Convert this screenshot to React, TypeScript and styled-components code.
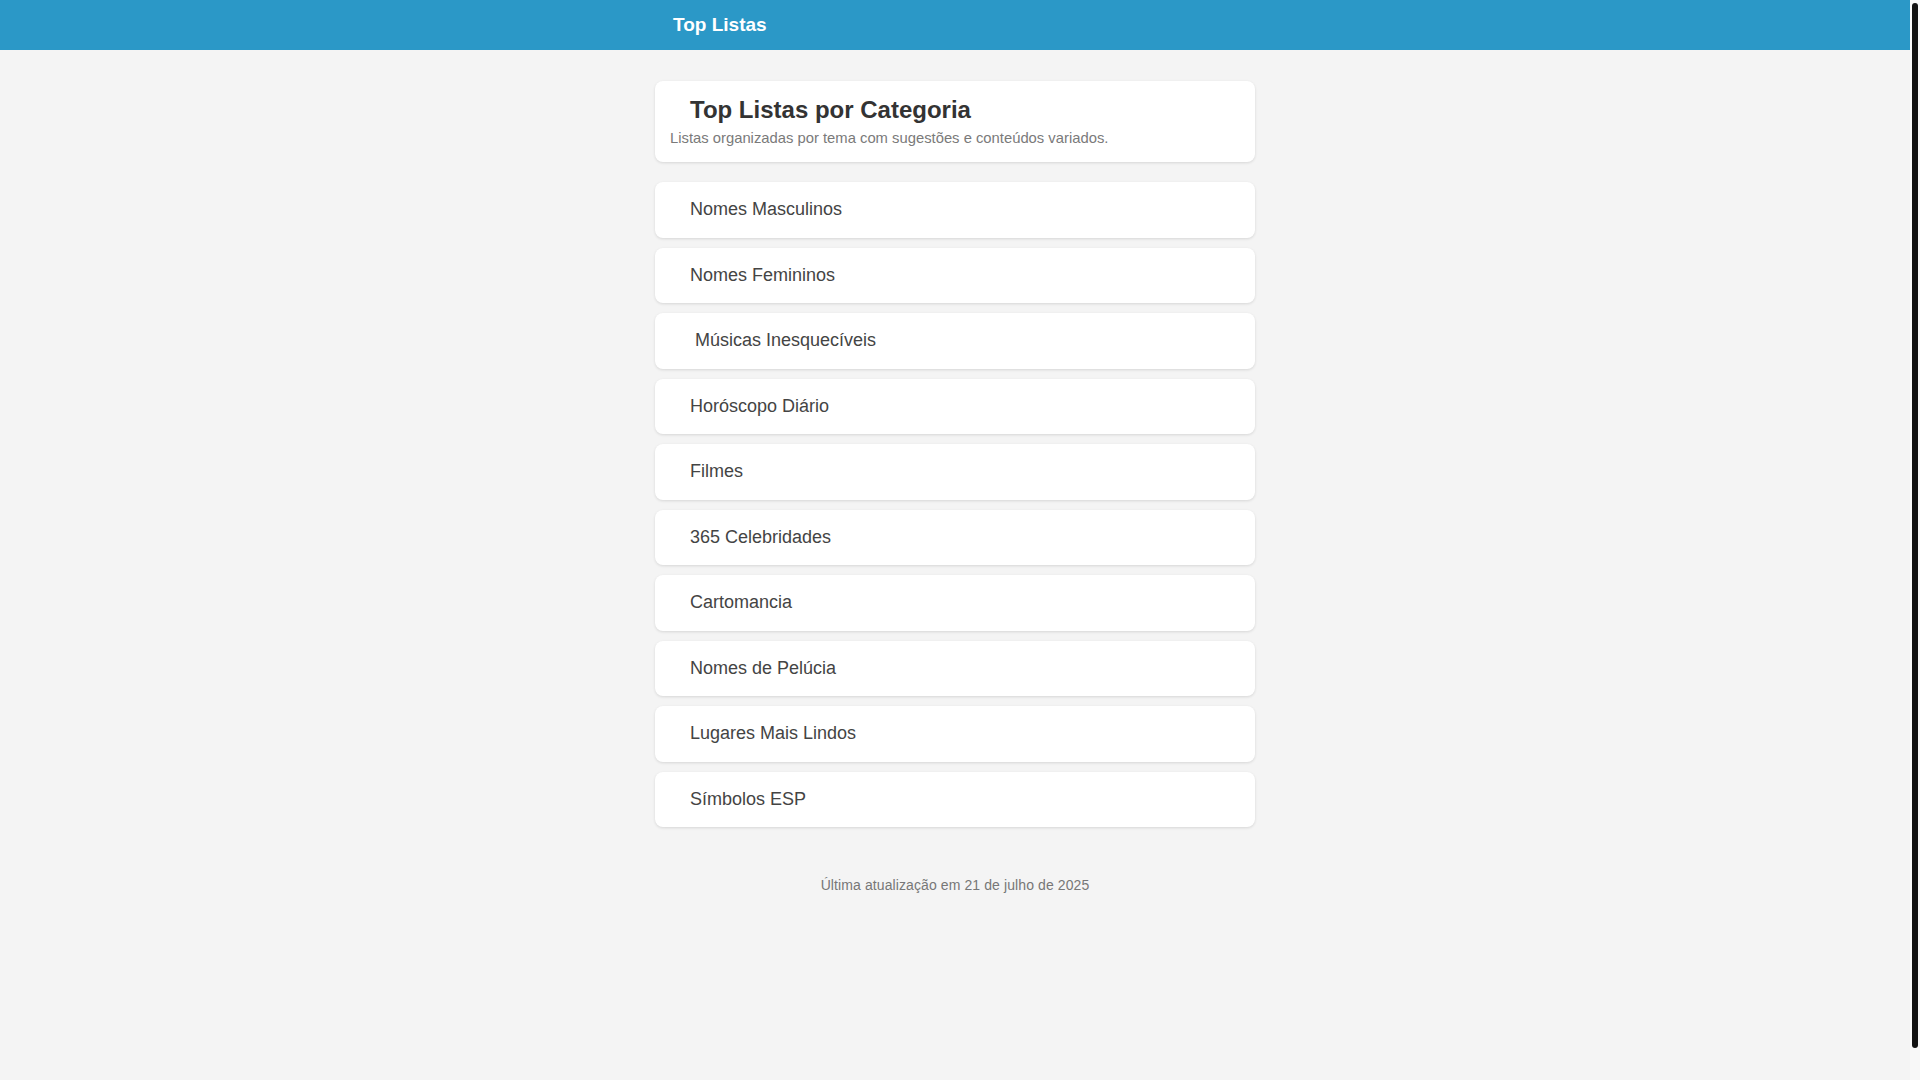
import React from "react";
import styled, { createGlobalStyle } from "styled-components";

const categories = [
    "Nomes Masculinos",
    "Nomes Femininos",
    "\u00a0Músicas Inesquecíveis",
    "Horóscopo Diário",
    "Filmes",
    "365 Celebridades",
    "Cartomancia",
    "Nomes de Pelúcia",
    "Lugares Mais Lindos",
    "Símbolos ESP",
];

const App: React.FC = () => {
    return (
        <Page>
            <GlobalStyle />
            <Header>
                <HeaderInner>
                    <Brand>Top Listas</Brand>
                </HeaderInner>
            </Header>
            <Main>
                <Intro>
                    <Title>Top Listas por Categoria</Title>
                    <Subtitle>Listas organizadas por tema com sugestões e conteúdos variados.</Subtitle>
                </Intro>
                <List>
                    {categories.map((name) => (
                        <Item key={name}>
                            <ItemLink href="#">{name}</ItemLink>
                        </Item>
                    ))}
                </List>
                <Footer>Última atualização em 21 de julho de 2025</Footer>
            </Main>
            {/* the page's scrollbar, as it shows in the screenshot */}
            <ScrollRail>
                <ScrollThumb />
            </ScrollRail>
        </Page>
    );
};

export default App;

const GlobalStyle = createGlobalStyle`
    html, body {
        margin: 0;
        padding: 0;
        background-color: #f4f4f4;
        font-family: "Liberation Sans", Arial, sans-serif;
    }
`;

const Page = styled.div`
    padding-right: 10px;
`;

const Header = styled.header`
    height: 50px;
    background-color: #2b98c7;
`;

const HeaderInner = styled.div`
    max-width: 600px;
    margin: 0 auto;
    padding: 0 18px;
    box-sizing: border-box;
`;

const Brand = styled.h1`
    margin: 0;
    font-size: 19px;
    font-weight: 700;
    line-height: 50px;

    color: #fff;
`;

const Main = styled.main`
    max-width: 600px;
    margin: 0 auto;
    padding-top: 31px;
`;

const Intro = styled.section`
    padding: 15px 15px 15px;
    margin-bottom: 20px;

    border-radius: 8px;
    box-shadow: 0 1px 3px rgba(0, 0, 0, 0.12);

    background-color: #fff;
`;

const Title = styled.h2`
    margin: 0 0 5px;
    padding-left: 20px;

    font-size: 24px;
    font-weight: 700;
    line-height: 28px;

    color: #333;
`;

const Subtitle = styled.p`
    margin: 0;

    font-size: 14.8px;
    line-height: 18px;

    color: #7a7a7a;
`;

const List = styled.ul`
    list-style: none;
    margin: 0;
    padding: 0;
`;

const Item = styled.li`
    margin-bottom: 10px;

    border-radius: 8px;
    box-shadow: 0 1px 3px rgba(0, 0, 0, 0.12);

    background-color: #fff;
`;

const ItemLink = styled.a`
    display: block;
    padding: 16px 35px;

    font-size: 18px;
    line-height: 23.5px;
    text-decoration: none;
    white-space: pre;

    color: #444;
`;

const Footer = styled.footer`
    padding-top: 40px;

    font-size: 14px;
    line-height: 16px;
    letter-spacing: 0.1px;
    text-align: center;

    color: #777;
`;

const ScrollRail = styled.div`
    position: fixed;
    top: 0;
    right: 0;
    width: 10px;
    height: 100vh;

    background-color: #f8f8f8;
`;

const ScrollThumb = styled.div`
    width: 6px;
    height: 1045px;
    margin: 3px 0 0 2px;

    border-radius: 3px;
    background-color: #111;
`;
